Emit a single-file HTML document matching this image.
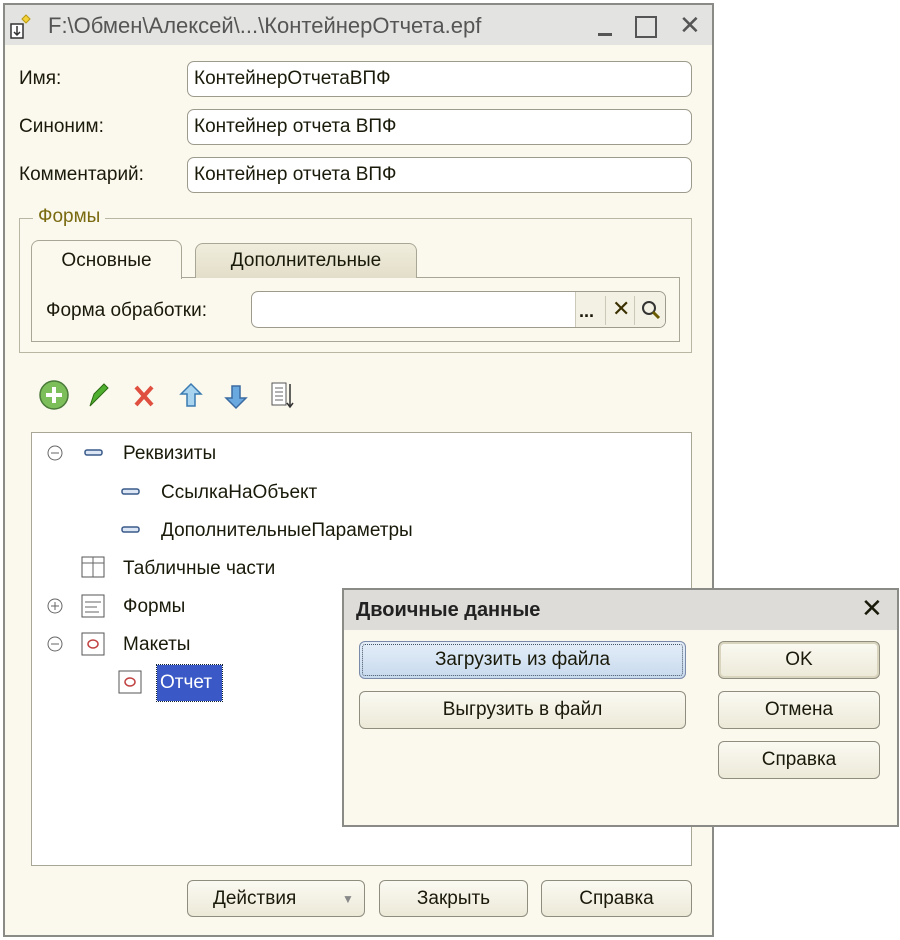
<!DOCTYPE html>
<html><head><meta charset="utf-8"><style>
*{box-sizing:border-box;margin:0;padding:0}
body{width:900px;height:940px;background:#fff;position:relative;overflow:hidden;font-family:"Liberation Sans Narrow","Liberation Sans","DejaVu Sans",sans-serif;color:#1a1a0a;font-size:19px}
.a{position:absolute}
.win{left:3px;top:3px;width:711px;height:934px;border:2px solid #8a8a86;background:#fbf9ee}
.tb{left:3px;top:3px;width:711px;height:42px;background:#e3e3e1;border:2px solid #8a8a86;border-bottom:none}
.lbl{white-space:nowrap;line-height:24px}
.inp{background:#fff;border:1px solid #9d9b8c;border-radius:7px;padding-left:6px;line-height:34px;white-space:nowrap}
.btn{border:1px solid #8f8d7e;border-radius:6px;background:linear-gradient(#fbfaf2,#ece9d8);text-align:center;line-height:36px;white-space:nowrap}
</style></head><body>
<div class="a win"></div>
<div class="a tb"></div>
<svg class="a" style="left:8px;top:12px" width="30" height="30" viewBox="0 0 30 30"><rect x="3" y="12" width="12" height="14" fill="#fff" stroke="#333" stroke-width="1.5"/><path d="M9 14v9M6 20l3 3 3-3" stroke="#333" stroke-width="1.5" fill="none"/><path d="M18 3l4 4-4 4-4-4z" fill="#f3d23a" stroke="#b89a10"/></svg>
<div class="a lbl" style="left:48px;top:14px;color:#555;font-size:22px">F:\Обмен\Алексей\...\КонтейнерОтчета.epf</div>
<div class="a" style="left:598px;top:33px;width:14px;height:3px;background:#555"></div>
<div class="a" style="left:635px;top:16px;width:22px;height:22px;border:2px solid #555"></div>
<div class="a lbl" style="left:679px;top:13px;font-size:26px;color:#555">✕</div>

<div class="a lbl" style="left:19px;top:67px">Имя:</div>
<div class="a lbl" style="left:19px;top:115px">Синоним:</div>
<div class="a lbl" style="left:19px;top:163px">Комментарий:</div>
<div class="a inp" style="left:187px;top:61px;width:505px;height:36px">КонтейнерОтчетаВПФ</div>
<div class="a inp" style="left:187px;top:109px;width:505px;height:36px">Контейнер отчета ВПФ</div>
<div class="a inp" style="left:187px;top:157px;width:505px;height:36px">Контейнер отчета ВПФ</div>

<div class="a" style="left:19px;top:218px;width:673px;height:135px;border:1px solid #b9b7a4"></div>
<div class="a lbl" style="left:33px;top:205px;background:#fbf9ee;padding:0 5px;color:#7a6a10">Формы</div>
<div class="a" style="left:31px;top:277px;width:649px;height:65px;border:1px solid #a8a694"></div>
<div class="a" style="left:195px;top:243px;width:222px;height:35px;border:1px solid #a8a694;border-bottom:none;border-radius:8px 8px 0 0;background:linear-gradient(#f1eddd,#e2dec9);text-align:center;line-height:34px">Дополнительные</div>
<div class="a" style="left:31px;top:240px;width:151px;height:39px;border:1px solid #a8a694;border-bottom:none;border-radius:8px 8px 0 0;background:#fbf9ee;text-align:center;line-height:40px">Основные</div>
<div class="a lbl" style="left:46px;top:299px">Форма обработки:</div>
<div class="a inp" style="left:251px;top:291px;width:415px;height:37px;overflow:hidden;padding:0">
 <div class="a" style="right:0;top:0;width:90px;height:37px;background:#f3f1e4;border-left:1px solid #ccc9b8"></div>
 <div class="a" style="left:327px;top:2px;font-size:18px;font-weight:bold">...</div>
 <div class="a" style="left:360px;top:0;font-size:22px;color:#3a3000">✕</div>
 <div class="a" style="left:353px;top:4px;width:1px;height:29px;background:#ccc9b8"></div>
 <div class="a" style="left:382px;top:4px;width:1px;height:29px;background:#ccc9b8"></div>
 <svg class="a" style="left:388px;top:7px" width="22" height="22"><circle cx="9" cy="9" r="6" fill="none" stroke="#333" stroke-width="2"/><path d="M13 13l6 6" stroke="#6a5a00" stroke-width="3"/></svg>
</div>

<svg class="a" style="left:36px;top:378px" width="270" height="34" viewBox="0 0 270 34">
<circle cx="18" cy="17" r="14" fill="#7cbf5a" stroke="#4a7a3a" stroke-width="1.5"/><path d="M18 9v16M10 17h16" stroke="#fff" stroke-width="4"/>
<path d="M54 28l4-12 10-10 4 4-10 10z" fill="#4fb030" stroke="#2a6a10"/>
<path d="M100 9l16 18M116 9l-16 18" stroke="#e05040" stroke-width="4"/>
<path d="M155 6l-10 10h6v12h8V16h6z" fill="#a8d4f0" stroke="#3a7ab0" stroke-width="1.5"/>
<path d="M200 30l-10-10h6V8h8v12h6z" fill="#6aa8e0" stroke="#3a6aa0" stroke-width="1.5"/>
<rect x="236" y="5" width="14" height="22" fill="#fff" stroke="#555"/><path d="M239 10h8M239 14h8M239 18h8M239 22h8" stroke="#666"/><path d="M254 6v22M251 25l3 4 3-4" stroke="#333" stroke-width="1.5" fill="none"/>
</svg>

<div class="a" style="left:31px;top:432px;width:661px;height:434px;background:#fff;border:1px solid #a8a694"></div>
<svg class="a" style="left:40px;top:440px" width="200" height="260">
<g fill="none" stroke="#666"><circle cx="15" cy="13" r="7"/><path d="M11 13h8"/><circle cx="15" cy="166" r="7"/><path d="M11 166h8M15 162v8"/><circle cx="15" cy="204" r="7"/><path d="M11 204h8"/></g>
<g fill="#dce6f4" stroke="#3a5a8a" stroke-width="1.5"><rect x="45" y="10" width="17" height="5" rx="2"/><rect x="82" y="49" width="17" height="5" rx="2"/><rect x="82" y="87" width="17" height="5" rx="2"/></g>
<g fill="#fff" stroke="#555"><rect x="42" y="117" width="22" height="20"/><rect x="42" y="155" width="22" height="22"/><rect x="42" y="193" width="22" height="22"/><rect x="79" y="231" width="22" height="22"/></g>
<path d="M53 117v20M42 123h22M45 162h16M45 167h12M45 172h14" stroke="#666"/>
<g stroke="#c04040" stroke-width="1.5" fill="none"><ellipse cx="53" cy="204" rx="5" ry="4"/><ellipse cx="90" cy="242" rx="5" ry="4"/></g>
</svg>
<div class="a lbl" style="left:123px;top:442px">Реквизиты</div>
<div class="a lbl" style="left:161px;top:481px">СсылкаНаОбъект</div>
<div class="a lbl" style="left:161px;top:519px">ДополнительныеПараметры</div>
<div class="a lbl" style="left:123px;top:557px">Табличные части</div>
<div class="a lbl" style="left:123px;top:595px">Формы</div>
<div class="a lbl" style="left:123px;top:633px">Макеты</div>
<div class="a lbl" style="left:157px;top:665px;width:65px;height:36px;background:#3a58c6;color:#fff;line-height:36px;padding-left:3px;outline:1px dotted #123">Отчет</div>

<div class="a btn" style="left:187px;top:880px;width:178px;height:37px;text-align:left;padding-left:25px">Действия<span style="position:absolute;left:154px;top:0;color:#888;font-size:12px">▼</span></div>
<div class="a btn" style="left:379px;top:880px;width:149px;height:37px">Закрыть</div>
<div class="a btn" style="left:541px;top:880px;width:151px;height:37px">Справка</div>

<div class="a" style="left:342px;top:588px;width:557px;height:239px;background:#fbf9ee;border:2px solid #8a8a86"></div>
<div class="a" style="left:344px;top:590px;width:553px;height:40px;background:#dddcd8"></div>
<div class="a lbl" style="left:356px;top:598px;font-weight:bold;font-family:'Liberation Sans',sans-serif;font-size:20px;color:#222">Двоичные данные</div>
<div class="a lbl" style="left:861px;top:596px;font-size:26px;font-weight:bold">✕</div>
<div class="a btn" style="left:359px;top:641px;width:327px;height:38px;background:linear-gradient(#e4eef8,#c8daee);border-color:#7a8aa8;outline:1px dotted #456;outline-offset:-4px">Загрузить из файла</div>
<div class="a btn" style="left:359px;top:691px;width:327px;height:38px">Выгрузить в файл</div>
<div class="a btn" style="left:718px;top:641px;width:162px;height:38px;box-shadow:inset 0 0 0 2px #d9d4bd">OK</div>
<div class="a btn" style="left:718px;top:691px;width:162px;height:38px">Отмена</div>
<div class="a btn" style="left:718px;top:741px;width:162px;height:38px">Справка</div>
</body></html>
